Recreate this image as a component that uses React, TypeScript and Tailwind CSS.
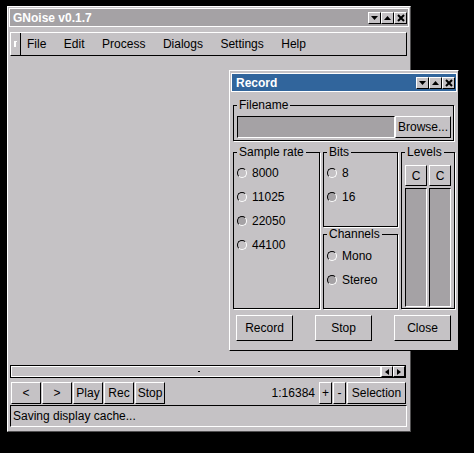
import type { ReactNode } from 'react';

const raised = '[border-color:#fff_#000_#000_#fff]';
const sunken = '[border-color:#000_#fff_#fff_#000]';

function TitleButtons() {
  return (
    <div className="flex">
      <div className={`flex h-[12px] w-[13px] items-center justify-center border bg-[#c5c2c5] ${raised}`}>
        <svg width="7" height="4" viewBox="0 0 7 4">
          <path d="M0 0h7L3.5 4z" fill="#000" />
        </svg>
      </div>
      <div className={`flex h-[12px] w-[13px] items-center justify-center border bg-[#c5c2c5] ${raised}`}>
        <svg width="7" height="4" viewBox="0 0 7 4">
          <path d="M0 4h7L3.5 0z" fill="#000" />
        </svg>
      </div>
      <div className={`flex h-[12px] w-[13px] items-center justify-center border bg-[#c5c2c5] ${raised}`}>
        <svg width="8" height="8" viewBox="0 0 8 8">
          <path d="M1 1l6 6M7 1L1 7" stroke="#000" strokeWidth="2" />
        </svg>
      </div>
    </div>
  );
}

function Button({ label, className = '' }: { label: string; className?: string }) {
  return (
    <div className={`flex items-center justify-center border ${raised} ${className}`}>
      {label}
    </div>
  );
}

function Radio({ label, on = false }: { label: string; on?: boolean }) {
  return (
    <div className="flex h-[24px] items-center gap-[5px]">
      <span
        className={`h-[10px] w-[10px] rounded-full border ${sunken} ${on ? 'bg-[#a5a2a5]' : ''}`}
      />
      <span>{label}</span>
    </div>
  );
}

function Frame({ label, className = '', children }: { label: string; className?: string; children: ReactNode }) {
  return (
    <fieldset className={`flex min-w-0 flex-col border border-black shadow-[1px_1px_0_#fff] ${className}`}>
      <legend className="ml-[3px] px-[2px] leading-[13px]">{label}</legend>
      {children}
    </fieldset>
  );
}

function MainWindow() {
  const menu = ['File', 'Edit', 'Process', 'Dialogs', 'Settings', 'Help'];
  return (
    <div className="absolute left-[7px] top-[6px] flex h-[426px] w-[404px] flex-col border bg-[#c5c2c5] [border-color:#fff_#525152_#525152_#fff]">
      <div className="mx-[1px] mt-[1px] flex h-[19px] items-center justify-between border border-white bg-[#a5a2a5] pl-[3px] pr-[1px]">
        <span className="font-bold text-white">GNoise v0.1.7</span>
        <TitleButtons />
      </div>

      <div className={`ml-[2px] mr-[3px] mt-[5px] flex h-[24px] items-center border ${raised}`}>
        <div className="flex h-full w-[10px] items-center justify-center border-r border-black">
          <span className="h-[6px] w-[3px] border-l-2 border-t border-white" />
        </div>
        <div className="ml-[6px] flex gap-[17.5px]">
          {menu.map((m) => (
            <span key={m}>{m}</span>
          ))}
        </div>
      </div>

      <div className="flex-1" />

      <div className="ml-[2px] mr-[4px] flex h-[13px] border border-black">
        <div className="relative flex-1 border border-white">
          <span className="absolute left-[186px] top-[4px] h-[1px] w-[2px] bg-black" />
        </div>
        <div className={`flex w-[12px] items-center justify-center border ${raised}`}>
          <svg width="4" height="6" viewBox="0 0 4 6">
            <path d="M4 0v6L0 3z" fill="#000" />
          </svg>
        </div>
        <div className={`flex w-[12px] items-center justify-center border ${raised}`}>
          <svg width="4" height="6" viewBox="0 0 4 6">
            <path d="M0 0v6l4-3z" fill="#000" />
          </svg>
        </div>
      </div>

      <div className="ml-[3px] mr-[4px] mt-[4px] flex h-[22px] items-stretch justify-between">
        <div className="flex gap-[1px]">
          <Button label="<" className="w-[30px]" />
          <Button label=">" className="w-[30px]" />
          <Button label="Play" className="w-[30px]" />
          <Button label="Rec" className="w-[30px]" />
          <Button label="Stop" className="w-[30px]" />
        </div>
        <div className="flex items-stretch gap-[1px]">
          <span className="mr-[3px] self-center">1:16384</span>
          <Button label="+" className="w-[13px]" />
          <Button label="-" className="w-[13px]" />
          <Button label="Selection" className="w-[59px]" />
        </div>
      </div>

      <div className={`ml-[2px] mr-[3px] mt-[1px] mb-[4px] flex h-[22px] items-center border pl-[2px] ${sunken}`}>
        Saving display cache...
      </div>
    </div>
  );
}

function RecordDialog() {
  return (
    <div className={`absolute left-[229px] top-[70px] flex h-[281px] w-[230px] flex-col border bg-[#c5c2c5] ${raised}`}>
      <div className="mx-[1px] mt-[2px] flex h-[19px] items-center justify-between border border-white bg-[#31659c] pl-[4px] pr-[1px]">
        <span className="font-bold text-white">Record</span>
        <TitleButtons />
      </div>

      <Frame label="Filename" className="ml-[3px] mr-[4px] mt-[7px]">
        <div className="flex pb-[2px] pl-[3px] pr-[2px] pt-[4px]">
          <div className={`h-[22px] flex-1 border bg-[#a5a2a5] ${sunken}`} />
          <Button label="Browse..." className="h-[22px] w-[56px]" />
        </div>
      </Frame>

      <div className="ml-[3px] mt-[5px] flex h-[163px] gap-[3px]">
        <Frame label="Sample rate" className="w-[87px]">
          <div className="pl-[3px] pt-[2px]">
            <Radio label="8000" />
            <Radio label="11025" />
            <Radio label="22050" on />
            <Radio label="44100" />
          </div>
        </Frame>
        <div className="flex w-[75px] flex-col gap-[1px]">
          <Frame label="Bits" className="h-[81px]">
            <div className="pl-[3px] pt-[2px]">
              <Radio label="8" />
              <Radio label="16" on />
            </div>
          </Frame>
          <Frame label="Channels" className="h-[81px]">
            <div className="pl-[3px] pt-[3px]">
              <Radio label="Mono" />
              <Radio label="Stereo" on />
            </div>
          </Frame>
        </div>
        <Frame label="Levels" className="w-[54px]">
          <div className="grid flex-1 grid-cols-2 grid-rows-[21px_1fr] gap-x-[2px] gap-y-[2px] px-[3px] pb-[1px] pt-[6px]">
            <Button label="C" />
            <Button label="C" />
            <div className={`border bg-[#a5a2a5] ${sunken}`} />
            <div className={`border bg-[#a5a2a5] ${sunken}`} />
          </div>
        </Frame>
      </div>

      <div className="mt-[6px] flex justify-between pl-[6px] pr-[7px]">
        <Button label="Record" className="h-[26px] w-[57px]" />
        <Button label="Stop" className="h-[26px] w-[57px]" />
        <Button label="Close" className="h-[26px] w-[57px]" />
      </div>
    </div>
  );
}

export default function App() {
  return (
    <div className="relative h-[453px] w-[474px] overflow-hidden bg-black font-['Liberation_Sans',Arial,sans-serif] text-[12px] leading-none text-black">
      <MainWindow />
      <RecordDialog />
    </div>
  );
}
